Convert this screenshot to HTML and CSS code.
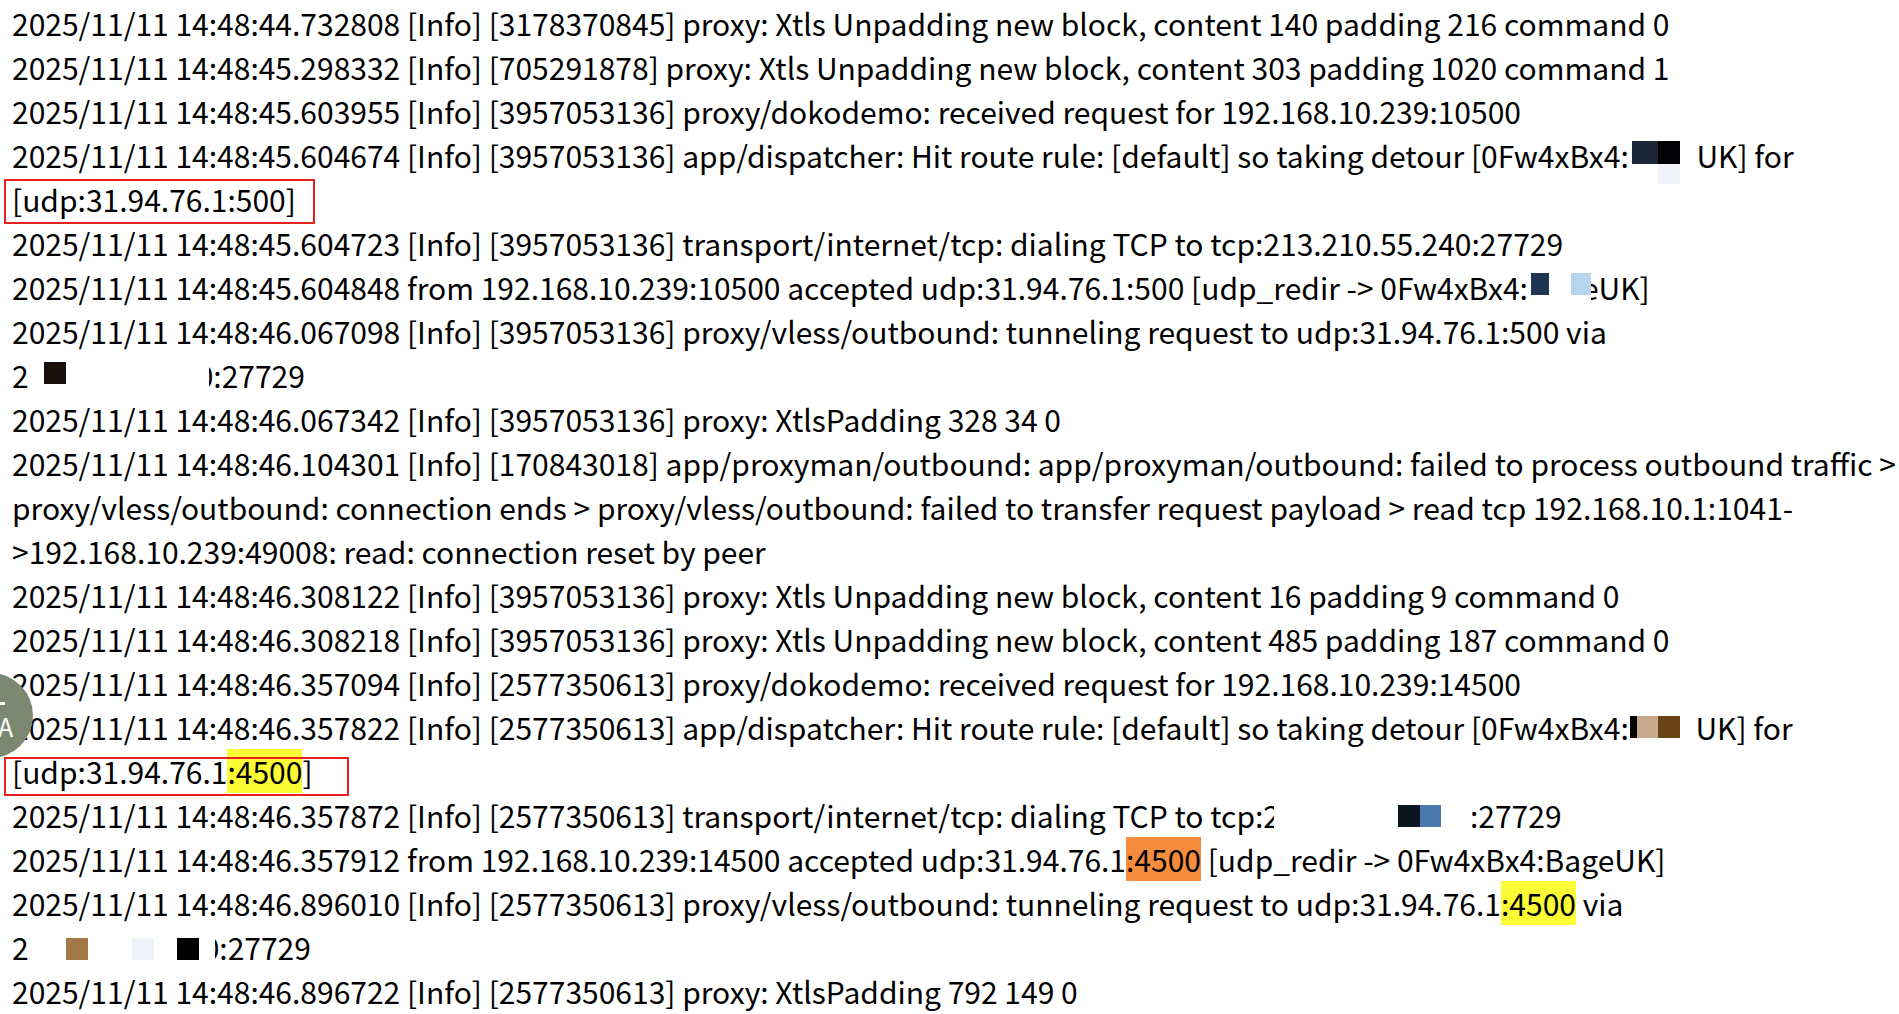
FILE: index.html
```html
<!DOCTYPE html>
<html>
<head>
<meta charset="utf-8">
<link rel="stylesheet" href="styles.css">
</head>
<body>
<div class="log">
  <div class="ln">2025/11/11 14:48:44.732808 [Info] [3178370845] proxy: Xtls Unpadding new block, content 140 padding 216 command 0</div>
  <div class="ln">2025/11/11 14:48:45.298332 [Info] [705291878] proxy: Xtls Unpadding new block, content 303 padding 1020 command 1</div>
  <div class="ln">2025/11/11 14:48:45.603955 [Info] [3957053136] proxy/dokodemo: received request for 192.168.10.239:10500</div>
  <div class="ln">2025/11/11 14:48:45.604674 [Info] [3957053136] app/dispatcher: Hit route rule: [default] so taking detour [0Fw4xBx4:<span class="rd rd-a"><i class="sq a1"></i><i class="sq a2"></i><i class="sq a3"></i></span> UK] for</div>
  <div class="ln"><span class="boxed box1">[udp:31.94.76.1:500]</span></div>
  <div class="ln">2025/11/11 14:48:45.604723 [Info] [3957053136] transport/internet/tcp: dialing TCP to tcp:213.210.55.240:27729</div>
  <div class="ln">2025/11/11 14:48:45.604848 from 192.168.10.239:10500 accepted udp:31.94.76.1:500 [udp_redir -&gt; 0Fw4xBx4:<span class="rd rd-b"><i class="sq b1"></i><i class="sq b2"></i></span>eUK]</div>
  <div class="ln">2025/11/11 14:48:46.067098 [Info] [3957053136] proxy/vless/outbound: tunneling request to udp:31.94.76.1:500 via</div>
  <div class="ln">2<span class="rd rd-c"><i class="sq c1"></i></span>0:27729</div>
  <div class="ln">2025/11/11 14:48:46.067342 [Info] [3957053136] proxy: XtlsPadding 328 34 0</div>
  <div class="ln">2025/11/11 14:48:46.104301 [Info] [170843018] app/proxyman/outbound: app/proxyman/outbound: failed to process outbound traffic &gt;</div>
  <div class="ln">proxy/vless/outbound: connection ends &gt; proxy/vless/outbound: failed to transfer request payload &gt; read tcp 192.168.10.1:1041-</div>
  <div class="ln">&gt;192.168.10.239:49008: read: connection reset by peer</div>
  <div class="ln">2025/11/11 14:48:46.308122 [Info] [3957053136] proxy: Xtls Unpadding new block, content 16 padding 9 command 0</div>
  <div class="ln">2025/11/11 14:48:46.308218 [Info] [3957053136] proxy: Xtls Unpadding new block, content 485 padding 187 command 0</div>
  <div class="ln">2025/11/11 14:48:46.357094 [Info] [2577350613] proxy/dokodemo: received request for 192.168.10.239:14500</div>
  <div class="ln">2025/11/11 14:48:46.357822 [Info] [2577350613] app/dispatcher: Hit route rule: [default] so taking detour [0Fw4xBx4:<span class="rd rd-d"><i class="sq d1"></i><i class="sq d2"></i><i class="sq d3"></i></span> UK] for</div>
  <div class="ln"><span class="boxed box2">[udp:31.94.76.1<span class="hl-y">:4500</span>]</span></div>
  <div class="ln">2025/11/11 14:48:46.357872 [Info] [2577350613] transport/internet/tcp: dialing TCP to tcp:2<span class="rd rd-e"><i class="sq e1"></i><i class="sq e2"></i></span>:27729</div>
  <div class="ln">2025/11/11 14:48:46.357912 from 192.168.10.239:14500 accepted udp:31.94.76.1<span class="hl-o">:4500</span> [udp_redir -&gt; 0Fw4xBx4:BageUK]</div>
  <div class="ln">2025/11/11 14:48:46.896010 [Info] [2577350613] proxy/vless/outbound: tunneling request to udp:31.94.76.1<span class="hl-y">:4500</span> via</div>
  <div class="ln">2<span class="rd rd-f"><i class="sq f1"></i><i class="sq f2"></i><i class="sq f3"></i></span>0:27729</div>
  <div class="ln">2025/11/11 14:48:46.896722 [Info] [2577350613] proxy: XtlsPadding 792 149 0</div>
</div>
<div class="avatar"><span class="av-bar"></span><span class="av-letter">A</span></div>
</body>
</html>
```

FILE: styles.css
```css
html, body {
  margin: 0;
  padding: 0;
  background: #ffffff;
  overflow: hidden;
}
body {
  width: 1899px;
  height: 1014px;
  position: relative;
  font-family: "Noto Sans CJK SC", "Noto Sans", sans-serif;
  color: #000;
}
.log {
  padding: 1px 0 0 12px;
  display: flex;
  flex-direction: column;
}
.ln {
  height: 44px;
  line-height: 44px;
  font-size: 30px;
  font-variant-numeric: tabular-nums;
  white-space: nowrap;
}
.boxed {
  position: relative;
  display: inline-block;
}
.boxed::after {
  content: "";
  position: absolute;
  border: 2px solid #e8201e;
  pointer-events: none;
}
.box1::after {
  left: -8px;
  right: -19px;
  top: 2px;
  bottom: -3px;
}
.box2::after {
  left: -8px;
  right: -36px;
  top: 8px;
  bottom: -3px;
}
.hl-y {
  display: inline-block;
  background: #fbfb36;
  height: 44px;
}
.hl-o {
  display: inline-block;
  background: #f68c3e;
  height: 44px;
}
.rd {
  position: relative;
  display: inline-block;
  vertical-align: top;
  height: 44px;
  background: #fff;
}
.sq {
  position: absolute;
  display: block;
}
/* line 4 */
.rd-a { width: 62px; margin-right: -1px; }
.a1 { left: 3px; top: 8px; width: 26px; height: 23px; background: #1b2636; }
.a2 { left: 29px; top: 8px; width: 22px; height: 23px; background: #020204; }
.a3 { left: 29px; top: 31px; width: 22px; height: 20px; background: #f3f4fa; }
/* line 7 */
.rd-b { width: 63px; margin-right: -9px; }
.b1 { left: 3px; top: 8px; width: 18px; height: 22px; background: #1b3552; }
.b2 { left: 43px; top: 8px; width: 20px; height: 22px; background: #b8d4ec; }
/* line 9 */
.rd-c { width: 180px; margin-right: -12px; }
.c1 { left: 15px; top: 9px; width: 22px; height: 22px; background: #1a0e0a; }
/* line 17 */
.rd-d { width: 60px; }
.d1 { left: 1px; top: 11px; width: 8px; height: 22px; background: #050505; }
.d2 { left: 8px; top: 11px; width: 21px; height: 22px; background: #c8a98b; }
.d3 { left: 29px; top: 11px; width: 22px; height: 22px; background: #6b4416; }
/* line 19 */
.rd-e { width: 196px; margin-left: -6px; }
.e1 { left: 124px; top: 12px; width: 22px; height: 22px; background: #0d1520; }
.e2 { left: 146px; top: 12px; width: 21px; height: 22px; background: #4a7aad; }
/* line 22 */
.rd-f { width: 186px; margin-right: -12px; }
.f1 { left: 37px; top: 13px; width: 22px; height: 22px; background: #a37a45; }
.f2 { left: 103px; top: 13px; width: 22px; height: 22px; background: #eef2fb; }
.f3 { left: 148px; top: 13px; width: 22px; height: 22px; background: #000; }
.avatar {
  position: absolute;
  left: -52px;
  top: 673px;
  width: 85px;
  height: 85px;
  border-radius: 50%;
  background: #7b8771;
  overflow: hidden;
}
.av-letter {
  position: absolute;
  left: 50px;
  top: 41px;
  font-family: "Noto Sans CJK SC", "Noto Sans", sans-serif;
  font-size: 25px;
  line-height: 25px;
  color: #fff;
}
.av-bar {
  position: absolute;
  left: 51px;
  top: 29px;
  width: 6px;
  height: 3px;
  background: #fff;
}
```
